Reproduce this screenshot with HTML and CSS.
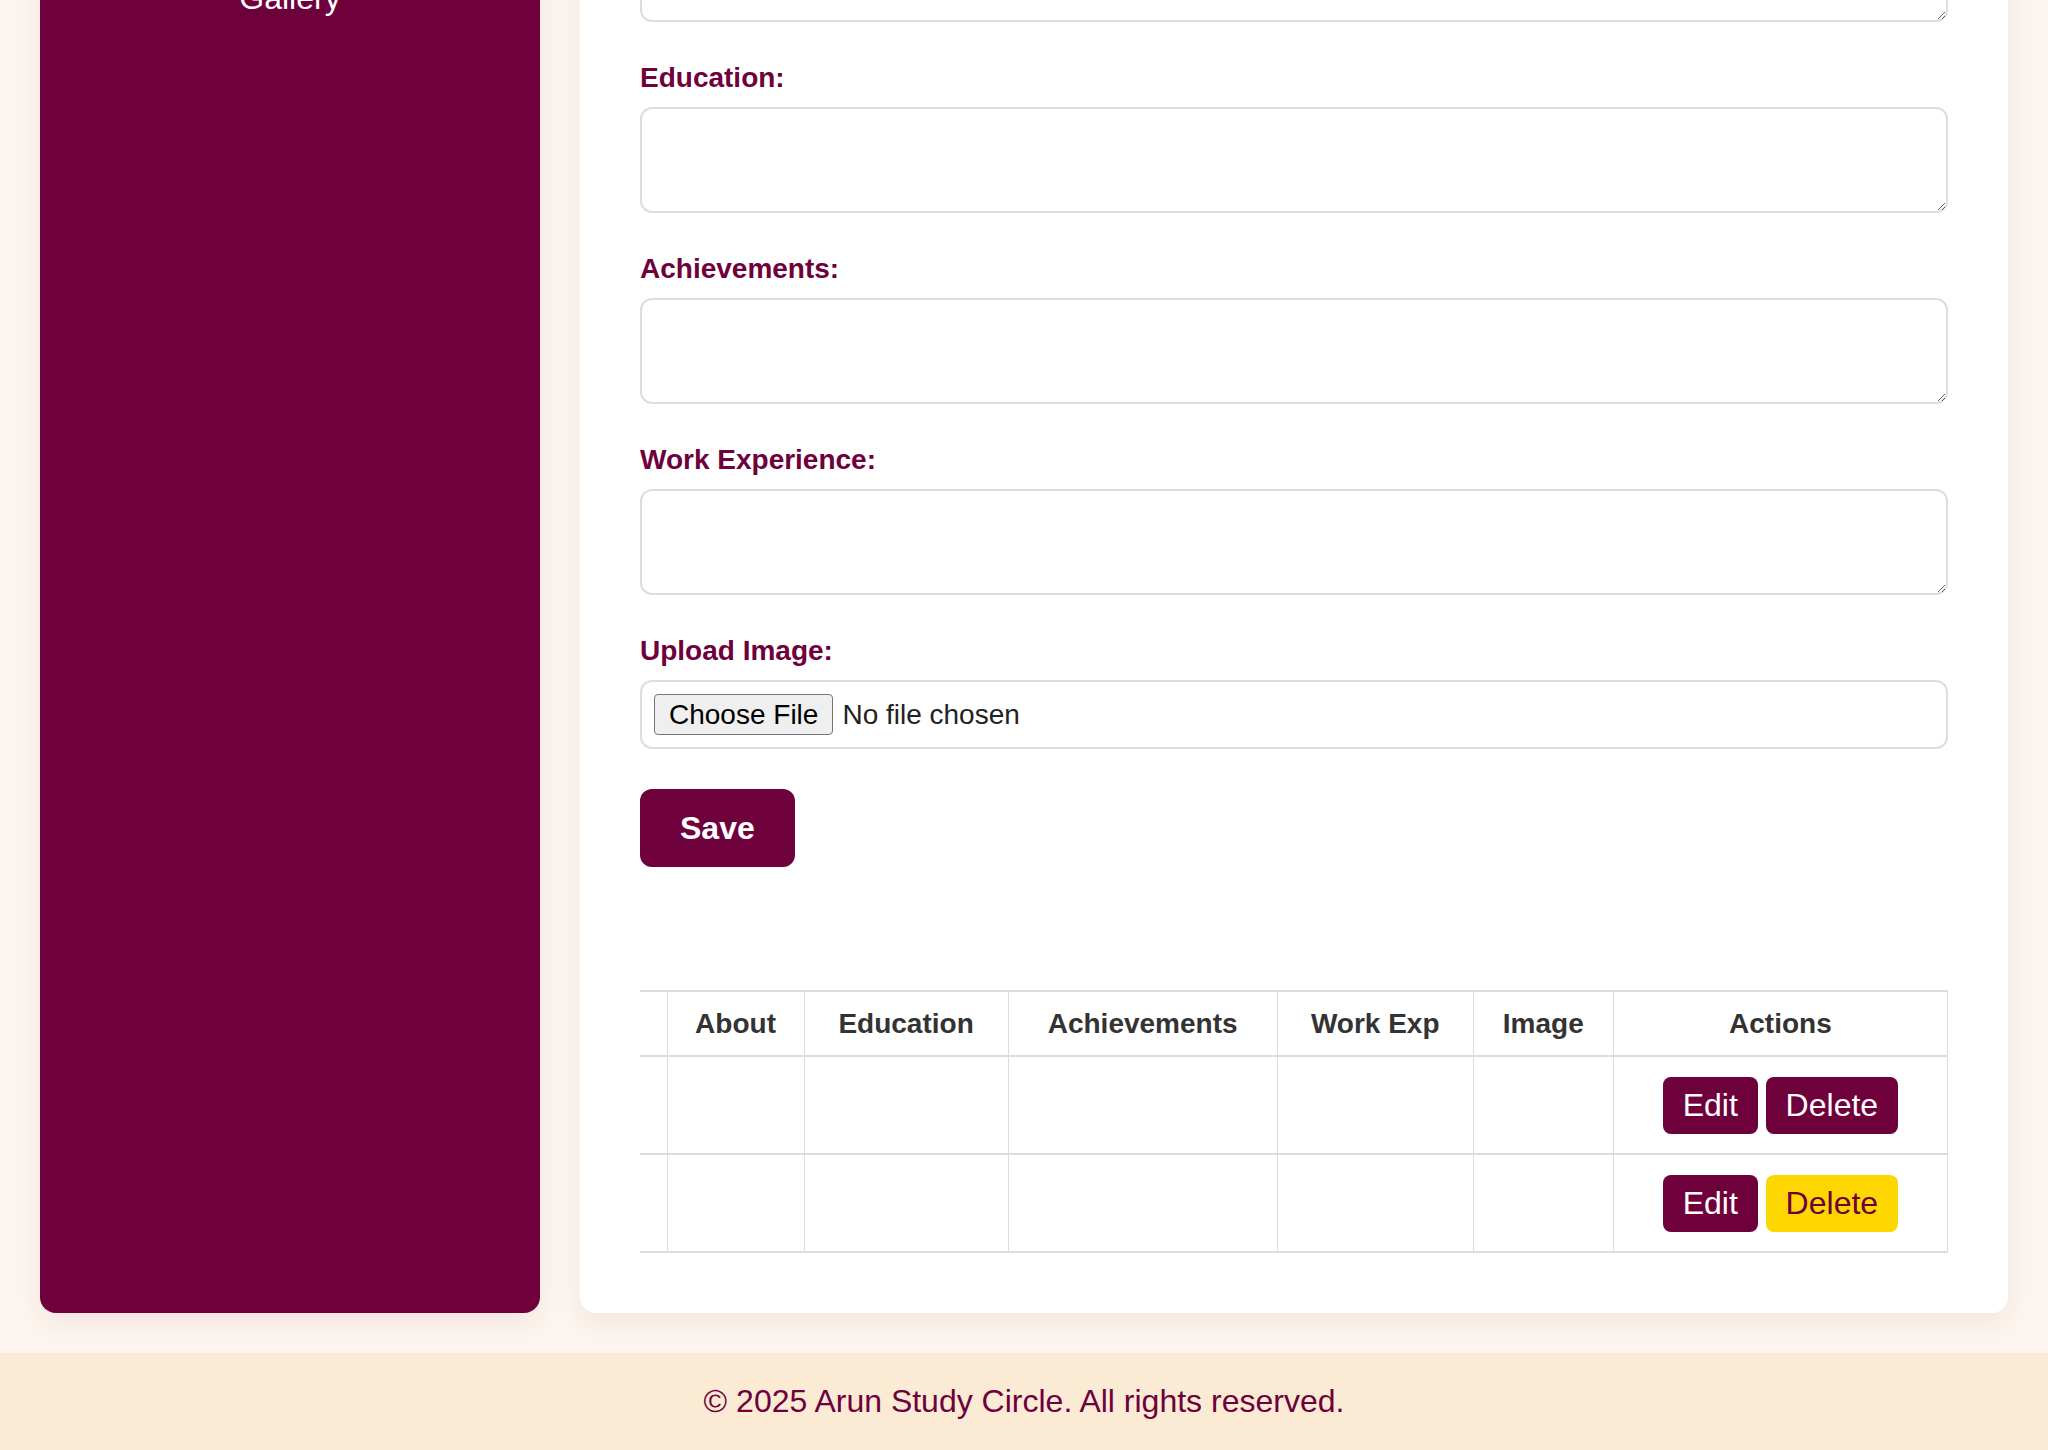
FILE: index.html
```html
<!DOCTYPE html>
<html lang="en">
<head>
<meta charset="utf-8">
<title>Admin - About</title>
<link rel="stylesheet" href="styles.css">
</head>
<body>
<div class="layout">
  <aside class="sidebar">
    <nav class="side-nav">
      <a href="#" class="side-link">Dashboard</a>
      <a href="#" class="side-link">About</a>
      <a href="#" class="side-link">Courses</a>
      <a href="#" class="side-link">Gallery</a>
    </nav>
  </aside>
  <main class="panel">
    <h2 class="panel-title">Manage About Section</h2>
    <form class="about-form">
      <div class="form-group">
        <label class="field-label" for="about">About:</label>
        <textarea id="about" class="field-area"></textarea>
      </div>
      <div class="form-group">
        <label class="field-label" for="education">Education:</label>
        <textarea id="education" class="field-area"></textarea>
      </div>
      <div class="form-group">
        <label class="field-label" for="achievements">Achievements:</label>
        <textarea id="achievements" class="field-area"></textarea>
      </div>
      <div class="form-group">
        <label class="field-label" for="work">Work Experience:</label>
        <textarea id="work" class="field-area"></textarea>
      </div>
      <div class="form-group">
        <label class="field-label" for="image">Upload Image:</label>
        <input id="image" class="file-input" type="file">
      </div>
      <button type="button" class="save-btn">Save</button>
    </form>

    <table class="data-table">
      <colgroup>
        <col class="col-id">
        <col class="col-about">
        <col class="col-edu">
        <col class="col-ach">
        <col class="col-work">
        <col class="col-img">
        <col class="col-act">
      </colgroup>
      <thead>
        <tr>
          <th></th>
          <th>About</th>
          <th>Education</th>
          <th>Achievements</th>
          <th>Work Exp</th>
          <th>Image</th>
          <th>Actions</th>
        </tr>
      </thead>
      <tbody>
        <tr>
          <td></td><td></td><td></td><td></td><td></td><td></td>
          <td class="actions"><button type="button" class="act-btn">Edit</button> <button type="button" class="act-btn">Delete</button></td>
        </tr>
        <tr>
          <td></td><td></td><td></td><td></td><td></td><td></td>
          <td class="actions"><button type="button" class="act-btn">Edit</button> <button type="button" class="act-btn act-btn-alt">Delete</button></td>
        </tr>
      </tbody>
    </table>
  </main>
</div>
<footer class="site-footer">© 2025 Arun Study Circle. All rights reserved.</footer>
</body>
</html>
```
FILE: styles.css
```css
* { box-sizing: border-box; }

html, body {
  margin: 0;
  height: 100%;
}

body {
  height: 100vh;
  overflow: hidden;
  display: flex;
  flex-direction: column;
  justify-content: flex-end;
  background: #fdf5ef;
  font-family: "Liberation Sans", Arial, sans-serif;
  color: #333;
}

.layout {
  flex-shrink: 0;
  display: flex;
  gap: 40px;
  padding: 40px;
  align-items: stretch;
}

.sidebar {
  flex: 0 0 500px;
  background: #6e003c;
  border-radius: 16px;
  box-shadow: 0 10px 30px rgba(90, 40, 10, 0.07);
  padding: 66px 20px 40px;
}

.side-nav {
  display: flex;
  flex-direction: column;
}

.side-link {
  display: block;
  color: #fff;
  text-decoration: none;
  text-align: center;
  font-size: 32px;
  line-height: 37px;
  padding: 12px 0;
}

.panel {
  flex: 1;
  min-width: 0;
  background: #fff;
  border-radius: 16px;
  box-shadow: 0 10px 30px rgba(90, 40, 10, 0.07);
  padding: 60px;
}

.panel-title {
  margin: 0 0 40px;
  font-size: 44px;
  line-height: 52px;
  color: #6e003c;
}

.form-group {
  margin-bottom: 40px;
}

.field-label {
  display: block;
  font-size: 28px;
  line-height: 32px;
  font-weight: bold;
  color: #6e003c;
  margin-bottom: 13px;
}

.field-area {
  display: block;
  width: 100%;
  height: 106px;
  border: 2px solid #ddd;
  border-radius: 12px;
  padding: 12px;
  font-family: "Liberation Sans", Arial, sans-serif;
  font-size: 28px;
  resize: vertical;
  background: #fff;
}

.file-input {
  display: block;
  width: 100%;
  height: 69px;
  border: 2px solid #ddd;
  border-radius: 12px;
  padding: 12px;
  font-family: "Liberation Sans", Arial, sans-serif;
  font-size: 28px;
  line-height: 41px;
  color: #222;
  background: #fff;
}

.file-input::file-selector-button {
  font-family: "Liberation Sans", Arial, sans-serif;
  font-size: 28px;
  line-height: 31px;
  height: 41px;
  padding: 4px 14px;
  border: 1px solid #767676;
  border-radius: 4px;
  background: #efefef;
  color: #000;
  margin-right: 9px;
  vertical-align: top;
}

.save-btn {
  display: block;
  background: #6e003c;
  color: #fff;
  border: none;
  border-radius: 12px;
  font-family: "Liberation Sans", Arial, sans-serif;
  font-size: 32px;
  font-weight: bold;
  line-height: 38px;
  padding: 20px 40px;
}

.data-table {
  width: 100%;
  margin-top: 123px;
  border-collapse: collapse;
  table-layout: fixed;
}

.col-id { width: 27px; }
.col-about { width: 137px; }
.col-edu { width: 204px; }
.col-ach { width: 269px; }
.col-work { width: 196px; }
.col-img { width: 140px; }
.col-act { width: 334px; }

.data-table tr {
  border-top: 2px solid #ddd;
  border-bottom: 2px solid #ddd;
}

.data-table th,
.data-table td {
  border-right: 1px solid #ddd;
  text-align: center;
  color: #333;
}

.data-table th {
  font-size: 28px;
  line-height: 32px;
  font-weight: bold;
  padding: 16px 0 15px;
}

.data-table td {
  font-size: 28px;
  padding: 19px 0;
  height: 98px;
}

.act-btn {
  display: inline-block;
  vertical-align: middle;
  background: #6e003c;
  color: #fff;
  border: none;
  border-radius: 8px;
  font-family: "Liberation Sans", Arial, sans-serif;
  font-size: 32px;
  line-height: 37px;
  padding: 10px 20px;
}

.act-btn-alt {
  background: #ffd700;
  color: #6e003c;
}

.site-footer {
  flex-shrink: 0;
  background: #fcebd4;
  color: #6e003c;
  text-align: center;
  font-size: 32px;
  line-height: 37px;
  padding: 30px 0;
}
```
